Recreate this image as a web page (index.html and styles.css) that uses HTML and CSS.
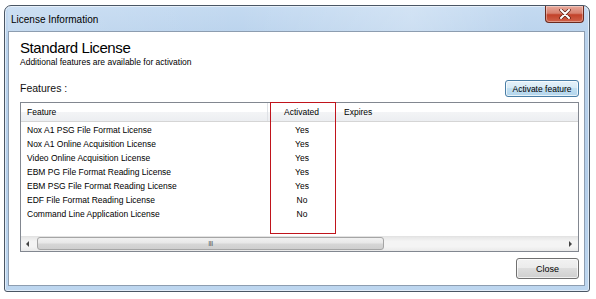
FILE: index.html
```html
<!DOCTYPE html>
<html lang="en">
<head>
  <meta charset="UTF-8" />
  <title>License Information</title>
  <link rel="stylesheet" href="styles.css">
</head>
<body>

  <div class="window">
    <div class="titlebar">
      <span class="caption">License Information</span>
      <button class="close-x" aria-label="Close">
        <svg width="12" height="10" viewBox="0 0 12 10">
          <path d="M2 1 L10 9 M10 1 L2 9" stroke="#5a1d12" stroke-width="3.4" stroke-linecap="round"/>
          <path d="M2 1 L10 9 M10 1 L2 9" stroke="#fff" stroke-width="2" stroke-linecap="round"/>
        </svg>
      </button>
    </div>

    <div class="panel">
      <div class="heading">
        <h1>Standard License</h1>
        <p>Additional features are available for activation</p>
      </div>

      <div class="features-bar">
        <span class="features-label">Features :</span>
        <button class="btn btn-focus">Activate feature</button>
      </div>

      <div class="listview">
        <div class="list-head">
          <div class="col col-feature">Feature</div>
          <div class="col col-activated">Activated</div>
          <div class="col col-expires">Expires</div>
        </div>

        <div class="list-body">
          <div class="row"><span class="col col-feature">Nox A1 PSG File Format License</span><span class="col col-activated">Yes</span><span class="col col-expires"></span></div>
          <div class="row"><span class="col col-feature">Nox A1 Online Acquisition License</span><span class="col col-activated">Yes</span><span class="col col-expires"></span></div>
          <div class="row"><span class="col col-feature">Video Online Acquisition License</span><span class="col col-activated">Yes</span><span class="col col-expires"></span></div>
          <div class="row"><span class="col col-feature">EBM PG File Format Reading License</span><span class="col col-activated">Yes</span><span class="col col-expires"></span></div>
          <div class="row"><span class="col col-feature">EBM PSG File Format Reading License</span><span class="col col-activated">Yes</span><span class="col col-expires"></span></div>
          <div class="row"><span class="col col-feature">EDF File Format Reading License</span><span class="col col-activated">No</span><span class="col col-expires"></span></div>
          <div class="row"><span class="col col-feature">Command Line Application License</span><span class="col col-activated">No</span><span class="col col-expires"></span></div>
        </div>

        <!-- horizontal scrollbar -->
        <div class="hscroll">
          <div class="arrow arrow-left"></div>
          <div class="track">
            <div class="thumb"><span class="grip">III</span></div>
          </div>
          <div class="arrow arrow-right"></div>
        </div>

        <!-- red highlight drawn over the Activated column -->
        <div class="highlight"></div>
      </div>

      <div class="footer">
        <button class="btn">Close</button>
      </div>
    </div>
  </div>

</body>
</html>
```

FILE: styles.css
```css
body {
  margin: 0;
  background: #fff;
  font-family: "Liberation Sans", Arial, sans-serif;
  color: #000;
}

.window {
  box-sizing: border-box;
  width: 586px;
  height: 287px;
  margin: 5px 0 0 4px;
  padding: 0 4px 5px 3px;
  border: 1px solid #4a5664;
  border-radius: 7px 7px 3px 3px;
  background: linear-gradient(to bottom, #c4daf1 0%, #b9d2ec 12%, #b4cee9 60%, #bdd6ef 100%);
  box-shadow: inset 0 0 0 1px rgba(255, 255, 255, 0.55);
  display: flex;
  flex-direction: column;
}

.titlebar {
  height: 25px;
  display: flex;
  justify-content: space-between;
  align-items: flex-start;
  background: linear-gradient(to right, rgba(255,255,255,0.15), rgba(255,255,255,0) 40%, rgba(255,255,255,0.25) 70%, rgba(255,255,255,0) 90%);
}

.caption {
  font-size: 10px;
  color: #000;
  padding: 8px 0 0 3px;
}

.close-x {
  width: 39px;
  height: 17px;
  margin-right: 1px;
  padding: 0;
  border: 1px solid #6b2a1e;
  border-top: none;
  border-radius: 0 0 4px 4px;
  background: linear-gradient(to bottom, #e9a89a 0%, #d7816f 45%, #c2422a 55%, #d0624a 100%);
  box-shadow: inset 0 0 0 1px rgba(255, 255, 255, 0.35);
  display: flex;
  align-items: center;
  justify-content: center;
}

.panel {
  flex: 1;
  background: #fff;
  border: 1px solid #8d9db0;
  padding: 7px 5px 0 11px;
  display: flex;
  flex-direction: column;
}

.heading h1 {
  margin: 0;
  font-size: 15px;
  line-height: 18px;
  font-weight: normal;
  letter-spacing: -0.4px;
  color: #000;
}

.heading p {
  margin: 0;
  font-size: 8.5px;
  line-height: 11px;
  color: #000;
}

.features-bar {
  margin-top: 12px;
  height: 17px;
  display: flex;
  align-items: center;
  justify-content: space-between;
}

.features-label {
  font-size: 10.5px;
  line-height: 13px;
  color: #111;
}

.btn {
  font-family: "Liberation Sans", Arial, sans-serif;
  font-size: 8.5px;
  color: #000;
  border: 1px solid #707070;
  border-radius: 3px;
  background: linear-gradient(to bottom, #f2f2f2 0%, #ebebeb 49%, #dddddd 50%, #cfcfcf 100%);
  box-shadow: inset 0 0 0 1px rgba(255, 255, 255, 0.7);
  padding: 0;
}

.btn-focus {
  width: 74px;
  height: 17px;
  border-color: #4a7ea6;
  background: linear-gradient(to bottom, #e5f1f9 0%, #d6eaf6 49%, #c2dff1 50%, #b2d5ec 100%);
}

.listview {
  position: relative;
  margin-top: 5px;
  height: 150px;
  box-sizing: border-box;
  border: 1px solid #828790;
  display: flex;
  flex-direction: column;
}

.list-head {
  height: 18px;
  display: flex;
  background: linear-gradient(to bottom, #ffffff 0%, #ffffff 50%, #f3f4f6 51%, #eceef1 100%);
  border-bottom: 1px solid #d5d5d5;
  font-size: 8.5px;
  color: #000;
}

.list-head .col {
  line-height: 18px;
  border-right: 1px solid #dfe2e6;
}

.list-head .col-expires {
  border-right: none;
}

.col-feature {
  width: 247px;
  padding-left: 6px;
  box-sizing: border-box;
}

.col-activated {
  width: 68px;
  text-align: center;
  box-sizing: border-box;
}

.col-expires {
  flex: 1;
  padding-left: 8px;
}

.list-body {
  flex: 1;
  padding-top: 1px;
  font-size: 8.5px;
  color: #000;
}

.row {
  height: 14px;
  display: flex;
  align-items: center;
}

.hscroll {
  height: 14px;
  display: flex;
  background: linear-gradient(to bottom, #e6e6e6, #f4f4f4 30%, #f4f4f4 70%, #e9e9e9);
  border-top: 1px solid #e3e3e3;
}

.arrow {
  width: 15px;
  position: relative;
}

.arrow::after {
  content: "";
  position: absolute;
  top: 4px;
  border-top: 3px solid transparent;
  border-bottom: 3px solid transparent;
}

.arrow-left::after {
  left: 5px;
  border-right: 3px solid #444;
}

.arrow-right::after {
  right: 6px;
  border-left: 3px solid #444;
}

.track {
  flex: 1;
  padding: 0 1px;
}

.thumb {
  width: 347px;
  height: 13px;
  box-sizing: border-box;
  border: 1px solid #a5a5a5;
  border-radius: 3px;
  background: linear-gradient(to bottom, #f1f1f1 0%, #e8e8e8 45%, #d6d6d6 55%, #cfcfcf 100%);
  display: flex;
  align-items: center;
  justify-content: center;
}

.grip {
  font-size: 7px;
  letter-spacing: -0.5px;
  color: #555;
}

.highlight {
  position: absolute;
  left: 249px;
  top: -1px;
  width: 66px;
  height: 132px;
  border: 1px solid #c0141c;
  box-sizing: border-box;
}

.footer {
  margin-top: 6px;
  display: flex;
  justify-content: flex-end;
}

.footer .btn {
  width: 63px;
  height: 21px;
  font-size: 9px;
}
```
